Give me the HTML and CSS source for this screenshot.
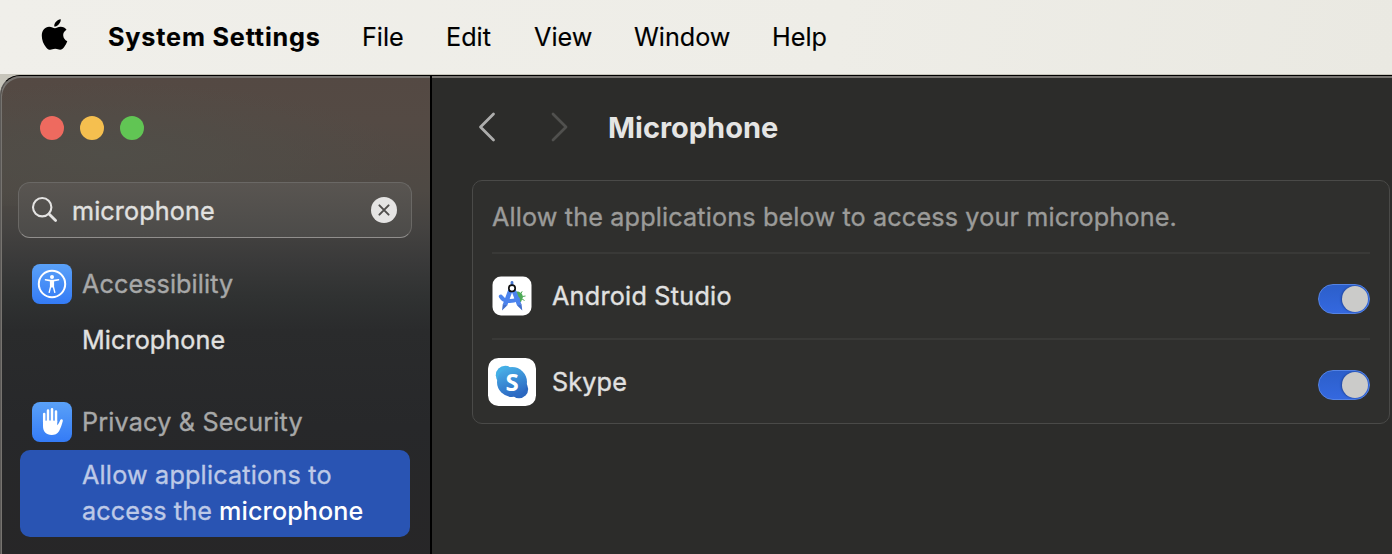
FILE: index.html
```
<!DOCTYPE html>
<html lang="en">
<head>
<meta charset="utf-8">
<title>System Settings</title>
<link rel="stylesheet" href="styles.css">
</head>
<body>
<nav class="menubar">
  <svg class="apple" width="28" height="32" viewBox="0 0 28 32"><path d="M19.8 0.2C20 2.8 18.1 5.6 15.8 6.9C14.9 7.4 13.9 7.6 13.2 7.5C13 5 14.7 2.5 16.7 1.3C17.7.6 18.800.3 19.800.2ZM14 9.2C15.3 9.2 17 7.7 19.7 7.7C22.2 7.8 24.3 8.900 25.500 10.700C23.200 12.100 22.100 14 22.200 16.300C22.300 19 23.800 21.200 26.300 22.200C25.600 24.300 24.500 26.300 23 28.300C21.900 29.700 20.800 30.800 19.100 30.800C17.500 30.800 16.700 29.800 14.200 29.800C11.900 29.800 11 30.800 9.200 30.800C7.600 30.800 6.400 29.800 5.200 28.400C2.400 25.100.8 21 .8 16.800C.8 11.200 4.100 7.900 8.100 7.800C10.600 7.800 12.500 9.200 14 9.200Z"/></svg>
  <span class="menu app-name">System Settings</span>
  <span class="menu">File</span>
  <span class="menu">Edit</span>
  <span class="menu">View</span>
  <span class="menu">Window</span>
  <span class="menu">Help</span>
</nav>
<div class="window">
  <aside class="sidebar">
    <div class="lights"><i class="light close"></i><i class="light minimize"></i><i class="light expand"></i></div>
    <div class="search">
      <svg width="28" height="28" viewBox="0 0 28 28" fill="none" stroke="#e4e3e2" stroke-linecap="round"><circle cx="11.2" cy="11.2" r="9.2" stroke-width="2.1"/><path d="M18 18l6.600 6.600" stroke-width="2.800"/></svg>
      <span class="query">microphone</span>
      <svg width="26" height="26" viewBox="0 0 26 26"><circle cx="13" cy="13" r="13" fill="#e5e4e3"/><path d="M8.4 8.4l9.2 9.2M17.6 8.4l-9.2 9.2" stroke="#504e4c" stroke-width="2" stroke-linecap="round"/></svg>
    </div>
    <div class="category">
      <div class="tile"><svg width="40" height="40" viewBox="0 0 40 40"><circle cx="20" cy="20" r="13.200" fill="none" stroke="#fff" stroke-width="2"/><circle cx="20" cy="12.900" r="2" fill="#fff"/><path d="M13.400 15.800L18.400 16.800H21.600L26.600 15.800M18.600 16.800h2.800v6h-2.800zM18.800 22L17.200 28.400M21.200 22L22.800 28.400" fill="#fff" stroke="#fff" stroke-width="1.400" stroke-linecap="round"/></svg></div>
      <span class="label accessibility">Accessibility</span>
    </div>
    <div class="result">Microphone</div>
    <div class="category privacy">
      <div class="tile"><svg width="40" height="40" viewBox="0 0 40 40"><path d="M12.200 20V12M16 19V8.500M20 19V7.300M24 20V9.500" fill="none" stroke="#fff" stroke-width="2.500" stroke-linecap="round"/><path d="M11 18.800Q17 18.200 25.200 18.800V23.300C26.500 22.300 27.400 20.200 28.100 18.300C28.800 16.500 31.200 17 30.800 19C30 22.200 28.700 26.300 27 29.300C25.300 32.100 22.600 33 19.700 33C14 33 11 29.300 11 24Z" fill="#fff"/></svg></div>
      <span class="label security">Privacy &amp; Security</span>
    </div>
    <div class="selected"><span class="line-one">Allow applications to</span><br><span class="line-two">access the <b>microphone</b></span></div>
  </aside>
  <main class="content">
    <header class="toolbar">
      <svg width="92" height="32" viewBox="0 0 92 32" fill="none" stroke-width="2.800" stroke-linecap="round" stroke-linejoin="round"><path d="M15.500 3L2.500 16L15.500 29" stroke="#adadac"/><path d="M75 3L88 16L75 29" stroke="#50504e"/></svg>
      <h1>Microphone</h1>
    </header>
    <section class="panel">
      <div class="row intro"><span class="description">Allow the applications below to access your microphone.</span></div>
      <div class="row android">
        <div class="app-icon"><svg width="48" height="48" viewBox="0 0 48 48"><rect x="4.500" y="4.500" width="39" height="39" rx="8.500" fill="#fff"/><path d="M28 19.500c4-.5 6.500 2 7 5.500l-2 5h-4z" fill="#4eaa57"/><path d="M33 21.500l1.200-2.200M34.500 24.500l3-.5M34 27l2.500 1.500" stroke="#4eaa57" stroke-width="1"/><path d="M24 10.500v4" stroke="#4876cf" stroke-width="2.800" stroke-linecap="round"/><path d="M22.700 17.500L17 33M25.300 17.500L31.300 33" stroke="#4b83ed" stroke-width="4.600"/><path d="M12.800 24.500c3 5 10 6 17 2.500" fill="none" stroke="#4b83ed" stroke-width="4" stroke-linecap="round"/><path d="M14.800 32l-.8 6.500 5.200-5zM33.500 32l.8 6.500-5.200-5z" fill="#426fcb"/><circle cx="24" cy="16.300" r="3.200" fill="#fff" stroke="#111" stroke-width="1.700"/></svg></div>
        <span class="app-title studio">Android Studio</span><div class="switch"><i></i></div>
      </div>
      <div class="row skype">
        <div class="app-icon"><svg width="48" height="48" viewBox="0 0 48 48"><defs><linearGradient id="sky" x2=".35" y2="1"><stop stop-color="#4bb6ea"/><stop offset="1" stop-color="#2d6bc4"/></linearGradient></defs><rect width="48" height="48" rx="10.500" fill="#fff"/><circle cx="17.200" cy="17.200" r="9.400" fill="#43afe6"/><circle cx="31" cy="31" r="9.200" fill="#2b68c0"/><circle cx="24" cy="24" r="15" fill="url(#sky)"/><text class="skype-letter" x="24" y="32.500" text-anchor="middle">S</text></svg></div>
        <span class="app-title skype-title">Skype</span><div class="switch"><i></i></div>
      </div>
    </section>
  </main>
</div>
</body>
</html>
```
FILE: styles.css
```
* { box-sizing: border-box; }
body { margin: 0; width: 1392px; height: 554px; overflow: hidden; background: #c7c5bb; font-family: Inter, sans-serif; font-size: 25.2px; line-height: 36px; color: #e1e1e0; white-space: nowrap; }
svg { display: block; flex: none; }
.menubar { height: 74px; background: linear-gradient(100deg, #f0efea, #eeede7 60%, #eae9e2); color: #000; display: grid; grid-template-columns: 68px 254px 84px 88px 100px 138px 100px; padding-left: 40px; -webkit-text-stroke: .15px; }
.apple { margin: 19px 0 0 1px; }
.menu { padding-top: 19px; }
.app-name { font-weight: 700; letter-spacing: .83px; }
.window { height: 500px; margin-top: 1px; border: 1px solid #000; border-right: 0; border-left-color: #5c5a58; border-radius: 20px 0 0 0; overflow: hidden; display: flex; background: #2c2c2a; -webkit-text-stroke: .35px; }
.sidebar { width: 431px; flex: none; border-right: 2px solid #000; border-radius: 19px 0 0 0; box-shadow: inset 1px 2px 0 #777470; background: radial-gradient(ellipse at 25% 60%, #504e48, transparent 65%) 0 0 / 100% 130px no-repeat, linear-gradient(#544943 0, #544a44 45px, #4e4944 115px, #454341 150px, #3a3a3a 185px, #303232 220px, #2a2b2c 255px, #27282a 350px, #272627 500px); padding: 40px 19px 0 17px; }
.lights { display: flex; gap: 16px; padding-left: 22px; }
.light { width: 24px; height: 24px; border-radius: 50%; }
.close { background: #ee6a5f; }
.minimize { background: #f5bf4f; }
.expand { background: #61c554; }
.search { width: 394px; height: 56px; margin-top: 42px; border: 1px solid #6a6865; border-bottom-color: #918f8d; border-radius: 12px; background: linear-gradient(#595551, #4c4b49); display: flex; align-items: center; padding: 0 14px 0 12px; }
.query { flex: 1; padding: 1px 0 0 13px; letter-spacing: .1px; }
.category { display: flex; align-items: center; padding-left: 14px; margin-top: 26px; height: 40px; }
.tile { width: 40px; height: 40px; border-radius: 8px; background: linear-gradient(#5aa1f8, #347bf6); }
.label { padding-left: 10px; color: #a7a8a8; }
.accessibility { letter-spacing: .08px; }
.security { letter-spacing: .17px; }
.result { margin: 18px 0 0 64px; height: 36px; letter-spacing: .08px; }
.privacy { margin-top: 44px; }
.selected { width: 390px; height: 87px; margin: 8px 0 0 2px; border-radius: 10px; background: #2954b3; color: #bdc9e7; padding: 7px 0 0 62px; }
.line-one { letter-spacing: .19px; }
.line-two { letter-spacing: .08px; }
.selected b { font-weight: 500; color: #fff; -webkit-text-stroke: 0; }
.content { flex: 1; padding-left: 40px; box-shadow: inset 0 2px 0 #777470; }
.toolbar { height: 104px; display: flex; align-items: flex-start; padding: 35px 0 0 6px; }
h1 { font-size: 29px; line-height: 36px; font-weight: 700; margin: -1px 0 0 38px; color: #e5e5e4; -webkit-text-stroke: 0; }
.panel { width: 918px; height: 244px; border: 1px solid #4a4a48; border-radius: 10px; background: #2f2f2d; padding: 0 19px; }
.row { display: flex; align-items: center; }
.intro { height: 71px; color: #9b9b99; letter-spacing: .15px; }
.android { height: 86px; border-top: 2px solid #393937; }
.skype { height: 86px; border-top: 2px solid #393937; }
.app-icon { margin-left: -4px; width: 64px; }
.app-title { flex: 1; }
.studio { letter-spacing: .24px; }
.skype-title { letter-spacing: .15px; }
.switch { width: 52px; height: 30px; margin-top: 6px; border-radius: 15px; border: 1px solid #5483e4; background: linear-gradient(#2c5fca, #3468df); padding: 1px 1px 1px 23px; }
.switch i { display: block; width: 26px; height: 26px; border-radius: 50%; background: #cbcbc9; box-shadow: -1px 0 2px #20469c; }
.skype-letter { font-family: "Open Sans", sans-serif; font-weight: 700; font-size: 24px; fill: #fff; -webkit-text-stroke: 0; }
```
